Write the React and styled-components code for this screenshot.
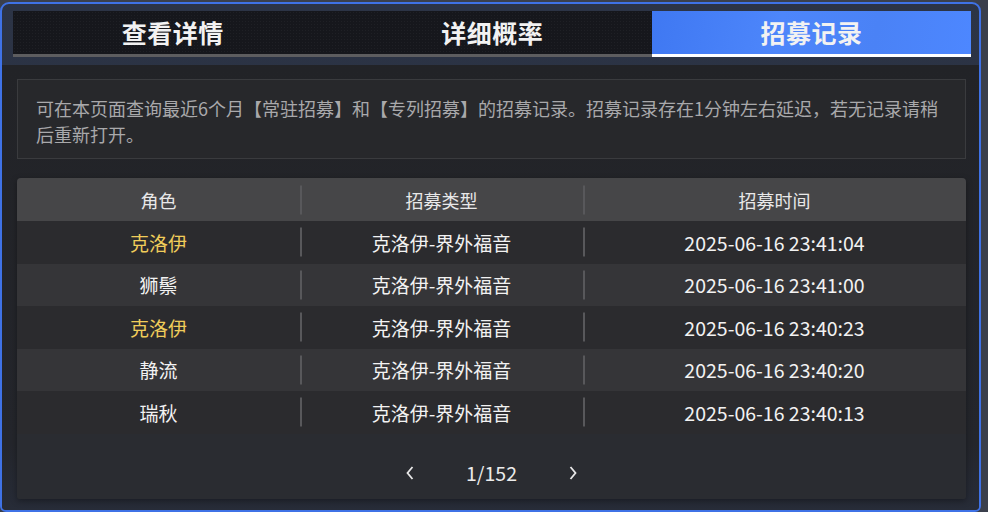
import React from 'react'
import styled, { createGlobalStyle } from 'styled-components'

const GlobalStyle = createGlobalStyle`
  html, body {
    margin: 0;
    padding: 0;
    background: #3a3f4c;
  }
  body {
    font-family: "Noto Sans CJK SC", "Noto Sans", sans-serif;
  }
`

const records = [
  { name: '克洛伊', gold: true, pool: '克洛伊-界外福音', time: '2025-06-16 23:41:04' },
  { name: '狮鬃', gold: false, pool: '克洛伊-界外福音', time: '2025-06-16 23:41:00' },
  { name: '克洛伊', gold: true, pool: '克洛伊-界外福音', time: '2025-06-16 23:40:23' },
  { name: '静流', gold: false, pool: '克洛伊-界外福音', time: '2025-06-16 23:40:20' },
  { name: '瑞秋', gold: false, pool: '克洛伊-界外福音', time: '2025-06-16 23:40:13' },
]

const App = () => {
  return (
    <>
      <GlobalStyle />
      <Frame>
        <Tabs>
          <Tab>查看详情</Tab>
          <Tab>详细概率</Tab>
          <Tab active>招募记录</Tab>
        </Tabs>
        <Body>
          <Notice>
            可在本页面查询最近6个月【常驻招募】和【专列招募】的招募记录。招募记录存在1分钟左右延迟，若无记录请稍后重新打开。
          </Notice>
          <Table>
            <HeadRow>
              <Cell>角色</Cell>
              <Cell sep>招募类型</Cell>
              <Cell sep>招募时间</Cell>
            </HeadRow>
            {records.map((r, i) => (
              <Row key={i} odd={i % 2 === 1}>
                <Cell gold={r.gold}>{r.name}</Cell>
                <Cell sep>{r.pool}</Cell>
                <Cell sep wide>{r.time}</Cell>
              </Row>
            ))}
            <Pager>
              <Arrow>
                <svg width="12" height="18" viewBox="0 0 12 18">
                  <path d="M8.5 3 L3.5 9 L8.5 15" fill="none" stroke="#e8e8e8" strokeWidth="1.8" />
                </svg>
              </Arrow>
              <PageText>1/152</PageText>
              <Arrow>
                <svg width="12" height="18" viewBox="0 0 12 18">
                  <path d="M3.5 3 L8.5 9 L3.5 15" fill="none" stroke="#e8e8e8" strokeWidth="1.8" />
                </svg>
              </Arrow>
            </Pager>
          </Table>
        </Body>
      </Frame>
    </>
  )
}

const Frame = styled.div`
  box-sizing: border-box;
  width: 981px;
  height: 510px;
  margin-top: 2px;
  border: 2px solid #3f72e6;
  border-radius: 9px 9px 6px 6px;
  background: linear-gradient(180deg, #2c3446 0%, #262c3a 100%);
  display: flex;
  flex-direction: column;
  overflow: hidden;
`

const Tabs = styled.div`
  display: flex;
  margin: 7px 8px 0 11px;
  height: 46px;
  background: #16171c;
  background-image: radial-gradient(rgba(255, 255, 255, 0.04) 1px, transparent 1px);
  background-size: 3px 3px;
`

const Tab = styled.div`
  flex: ${(p) => (p.active ? '0 0 319px' : '1')};
  display: flex;
  align-items: center;
  justify-content: center;
  box-sizing: border-box;
  padding-bottom: 2px;
  font-size: 25px;
  font-weight: 700;
  color: #f2f2f2;
  letter-spacing: 0.5px;
  border-bottom: 3px solid ${(p) => (p.active ? '#ffffff' : '#5d5d5f')};
  background: ${(p) =>
    p.active
      ? 'linear-gradient(100deg, #3f78f2 0%, #4d86fb 40%, #4a82f6 70%, #4d87ff 100%)'
      : 'transparent'};
`

const Body = styled.div`
  flex: 1;
  margin-top: 8px;
  padding: 14px 13px 11px 15px;
  background: linear-gradient(180deg, #222327 0%, #24262c 85%, #272c38 100%);
  display: flex;
  flex-direction: column;
  gap: 19px;
`

const Notice = styled.div`
  box-sizing: border-box;
  height: 80px;
  padding: 15px 19px 0 18px;
  border: 1px solid #3a3b3e;
  background: #27282b;
  color: #a9a9ab;
  font-size: 18px;
  line-height: 26px;
`

const Table = styled.div`
  flex: 1;
  display: flex;
  flex-direction: column;
  border-radius: 4px 4px 2px 2px;
  overflow: hidden;
  background: #2a2c31;
  box-shadow: 0 2px 6px rgba(0, 0, 0, 0.35);
`

const HeadRow = styled.div`
  display: grid;
  grid-template-columns: 283px 283px 1fr;
  height: 43px;
  background: #464648;
  color: #e8e8e8;
  font-size: 18px;
`

const Row = styled.div`
  display: grid;
  grid-template-columns: 283px 283px 1fr;
  height: 42.5px;
  background: ${(p) => (p.odd ? '#353538' : '#2b2b2e')};
  color: #f2f2f2;
  font-size: 19px;
`

const Cell = styled.div`
  position: relative;
  display: flex;
  align-items: center;
  justify-content: center;
  font-size: ${(p) => (p.wide ? '19.5px' : 'inherit')};
  color: ${(p) => (p.gold ? '#f0cd5a' : 'inherit')};

  &::before {
    content: '';
    display: ${(p) => (p.sep ? 'block' : 'none')};
    position: absolute;
    left: 0;
    top: 50%;
    transform: translateY(-50%);
    width: 2px;
    height: 29px;
    background: #58585b;
  }
`

const Pager = styled.div`
  flex: 1;
  display: flex;
  align-items: center;
  justify-content: center;
  gap: 50px;
  padding-top: 13px;
`

const Arrow = styled.div`
  display: flex;
  align-items: center;
`

const PageText = styled.div`
  color: #ececec;
  font-size: 19.5px;
`

export default App
